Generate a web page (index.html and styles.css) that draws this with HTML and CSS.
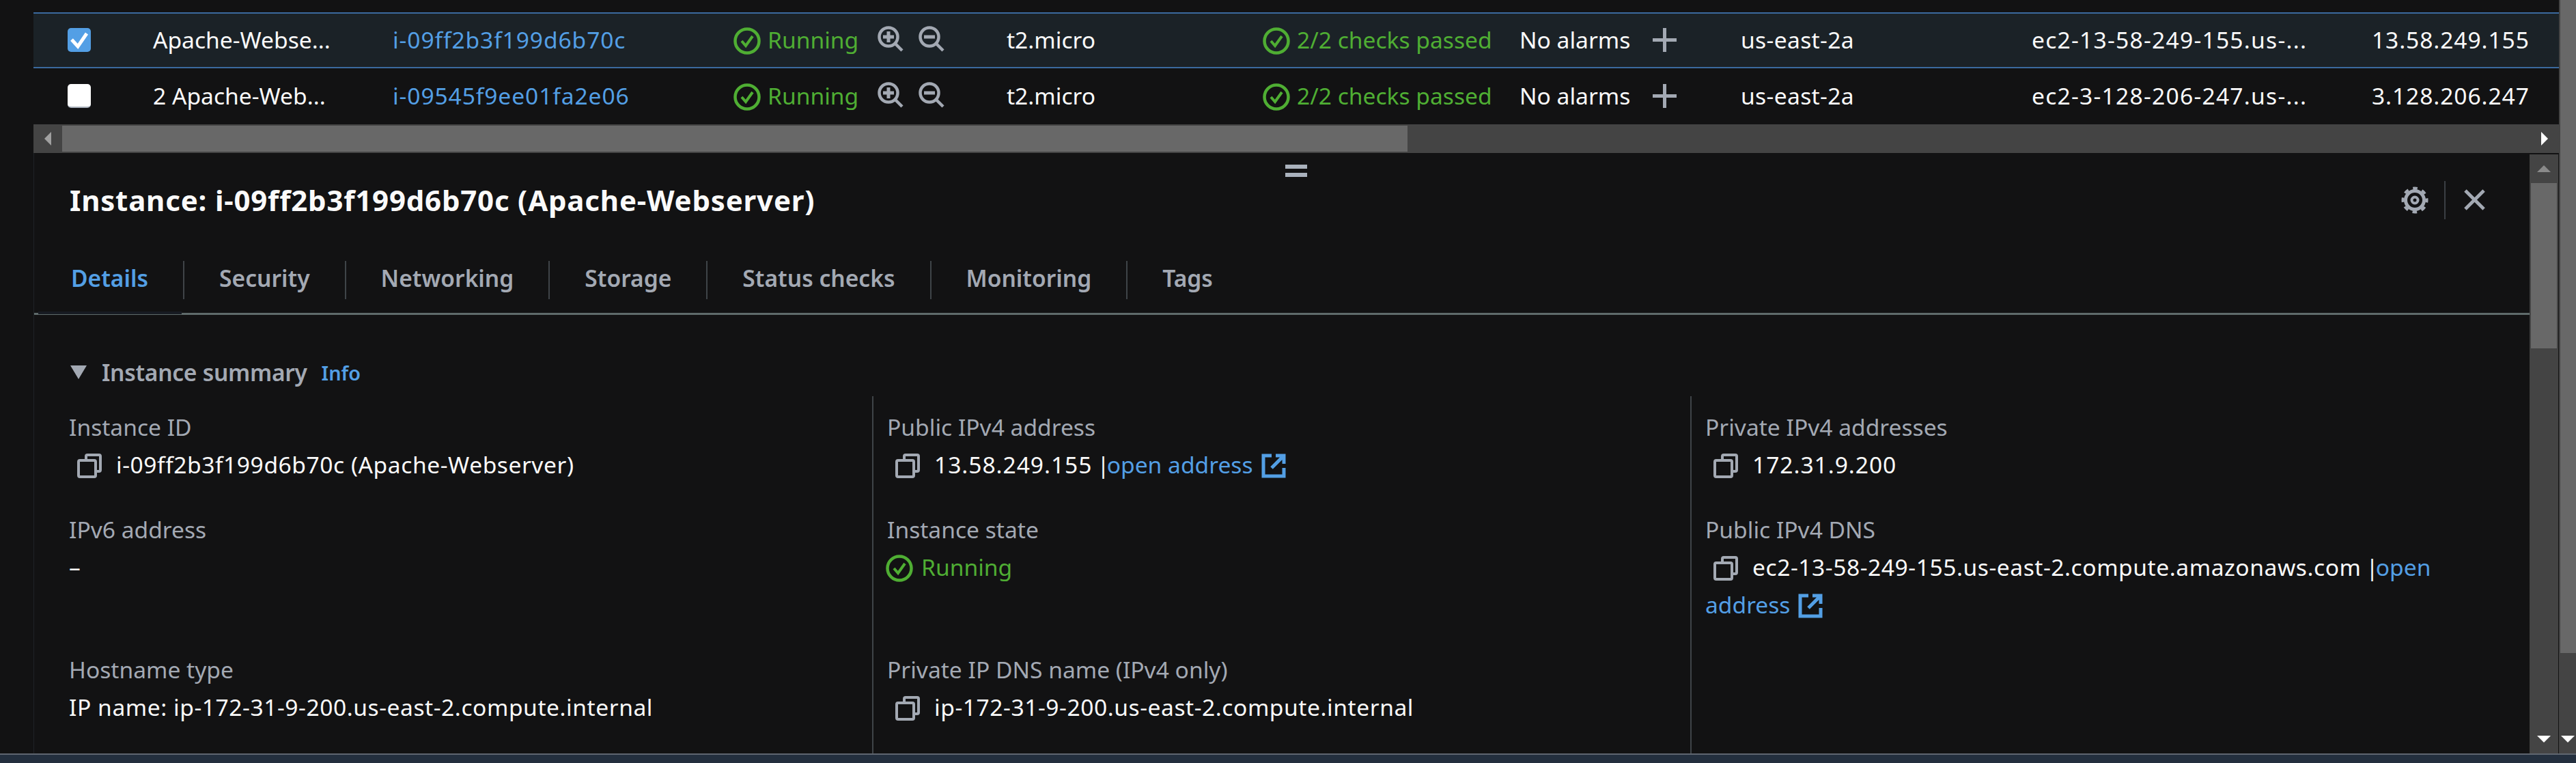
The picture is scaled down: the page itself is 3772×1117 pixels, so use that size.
FILE: index.html
```html
<!DOCTYPE html>
<html>
    <head>
        <meta charset="UTF-8">
        <title>Instances</title>
        <link rel="stylesheet" href="styles.css">
    </head>
    <body>
        <svg class="defs" width="0" height="0">
            <symbol id="ok" viewBox="0 0 40 40">
                <circle cx="20" cy="20" r="17.5" fill="none" stroke="currentColor" stroke-width="4.5"/>
                <path d="M12 20l6 7 10-14" fill="none" stroke="currentColor" stroke-width="4"/>
            </symbol>
            <symbol id="copy" viewBox="0 0 36 36">
                <path d="M13 8V4a2 2 0 0 1 2-2h17a2 2 0 0 1 2 2v20a2 2 0 0 1-2 2h-3" fill="none" stroke="currentColor" stroke-width="4"/>
                <rect x="2" y="10" width="25" height="24" rx="2" fill="none" stroke="currentColor" stroke-width="4"/>
            </symbol>
            <symbol id="ext" viewBox="0 0 36 36">
                <path d="M15 3H3v30h30V21" fill="none" stroke="currentColor" stroke-width="5"/>
                <path d="M21 3h12v12M33 3L15 21" fill="none" stroke="currentColor" stroke-width="5"/>
            </symbol>
            <symbol id="zoom-in" viewBox="0 0 38 38">
                <circle cx="16" cy="16" r="13.5" fill="none" stroke="currentColor" stroke-width="4.5"/>
                <path d="M26 26l10 10" stroke="currentColor" stroke-width="4.5"/>
                <path d="M16 8v16M8 16h16" stroke="currentColor" stroke-width="5"/>
            </symbol>
            <symbol id="zoom-out" viewBox="0 0 38 38">
                <circle cx="16" cy="16" r="13.5" fill="none" stroke="currentColor" stroke-width="4.5"/>
                <path d="M26 26l10 10" stroke="currentColor" stroke-width="4.5"/>
                <path d="M8 16h16" stroke="currentColor" stroke-width="5"/>
            </symbol>
        </svg>

        <div class="page">
            <div class="main">
                <div class="row row-selected">
                    <span class="cell c-check"><span class="check check-on">
                        <svg viewBox="0 0 34 35"><path d="M6 17l9 10 13-19" fill="none" stroke="#fff" stroke-width="5"/></svg>
                    </span></span>
                    <span class="cell c-name">Apache-Webse...</span>
                    <span class="cell c-id"><a>i-09ff2b3f199d6b70c</a></span>
                    <span class="cell c-state">
                        <svg class="ok-icon"><use href="#ok"/></svg><span class="green">Running</span>
                        <svg class="zoom-icon first"><use href="#zoom-in"/></svg><svg class="zoom-icon"><use href="#zoom-out"/></svg>
                    </span>
                    <span class="cell c-type">t2.micro</span>
                    <span class="cell c-checks"><svg class="ok-icon"><use href="#ok"/></svg><span class="green">2/2 checks passed</span></span>
                    <span class="cell c-alarm">No alarms<span class="plus"></span></span>
                    <span class="cell c-zone">us-east-2a</span>
                    <span class="cell c-dns">ec2-13-58-249-155.us-...</span>
                    <span class="cell c-ip">13.58.249.155</span>
                </div>
                <div class="row">
                    <span class="cell c-check"><span class="check"></span></span>
                    <span class="cell c-name">2 Apache-Web...</span>
                    <span class="cell c-id"><a>i-09545f9ee01fa2e06</a></span>
                    <span class="cell c-state">
                        <svg class="ok-icon"><use href="#ok"/></svg><span class="green">Running</span>
                        <svg class="zoom-icon first"><use href="#zoom-in"/></svg><svg class="zoom-icon"><use href="#zoom-out"/></svg>
                    </span>
                    <span class="cell c-type">t2.micro</span>
                    <span class="cell c-checks"><svg class="ok-icon"><use href="#ok"/></svg><span class="green">2/2 checks passed</span></span>
                    <span class="cell c-alarm">No alarms<span class="plus"></span></span>
                    <span class="cell c-zone">us-east-2a</span>
                    <span class="cell c-dns">ec2-3-128-206-247.us-...</span>
                    <span class="cell c-ip">3.128.206.247</span>
                </div>

                <div class="hscroll">
                    <span class="arrow-btn"><span class="tri-left"></span></span>
                    <span class="hthumb"></span>
                    <span class="hspace"></span>
                    <span class="arrow-btn"><span class="tri-right"></span></span>
                </div>

                <div class="panel">
                    <div class="panel-body">
                        <div class="handle"></div>
                        <div class="panel-head">
                            <h1>Instance: i-09ff2b3f199d6b70c (Apache-Webserver)</h1>
                            <span class="head-tools">
                                <svg class="gear" viewBox="0 0 40 40" fill="none" stroke="currentColor">
                                    <circle cx="20" cy="20" r="13.5" stroke-width="5"/>
                                    <circle cx="20" cy="20" r="17.5" stroke-width="4" stroke-dasharray="6.7 7.04" stroke-dashoffset="3.35"/>
                                    <circle cx="20" cy="20" r="4.5" stroke-width="4"/>
                                </svg>
                                <span class="tool-sep"></span>
                                <svg class="close" viewBox="0 0 34 34"><path d="M3 3l28 28M31 3L3 31" fill="none" stroke="currentColor" stroke-width="5"/></svg>
                            </span>
                        </div>
                        <div class="tabs">
                            <span class="tab tab-on">Details</span>
                            <span class="tab">Security</span>
                            <span class="tab">Networking</span>
                            <span class="tab">Storage</span>
                            <span class="tab">Status checks</span>
                            <span class="tab">Monitoring</span>
                            <span class="tab">Tags</span>
                        </div>
                        <div class="summary-head">
                            <span class="tri-down"></span>
                            <span class="summary-title">Instance summary</span>
                            <a class="info">Info</a>
                        </div>
                        <div class="fields">
                            <div class="field">
                                <div class="label">Instance ID</div>
                                <div class="value"><svg class="copy"><use href="#copy"/></svg><span class="num-sm">i-09ff2b3f199d6b70c (Apache-Webserver)</span></div>
                            </div>
                            <div class="field">
                                <div class="label">Public IPv4 address</div>
                                <div class="value"><svg class="copy"><use href="#copy"/></svg><span class="num">13.58.249.155</span> <span class="bar">|</span><a>open address<svg class="ext"><use href="#ext"/></svg></a></div>
                            </div>
                            <div class="field">
                                <div class="label">Private IPv4 addresses</div>
                                <div class="value"><svg class="copy"><use href="#copy"/></svg><span class="num">172.31.9.200</span></div>
                            </div>
                            <div class="field">
                                <div class="label">IPv6 address</div>
                                <div class="value">–</div>
                            </div>
                            <div class="field">
                                <div class="label">Instance state</div>
                                <div class="value"><svg class="ok-icon"><use href="#ok"/></svg><span class="green">Running</span></div>
                            </div>
                            <div class="field">
                                <div class="label">Public IPv4 DNS</div>
                                <div class="value"><svg class="copy"><use href="#copy"/></svg><span class="num-sm">ec2-13-58-249-155.us-east-2.compute.amazonaws.com</span> <span class="bar">|</span><a>open</a> <a>address<svg class="ext"><use href="#ext"/></svg></a></div>
                            </div>
                            <div class="field">
                                <div class="label">Hostname type</div>
                                <div class="value"><span class="num-sm">IP name: ip-172-31-9-200.us-east-2.compute.internal</span></div>
                            </div>
                            <div class="field">
                                <div class="label">Private IP DNS name (IPv4 only)</div>
                                <div class="value"><svg class="copy"><use href="#copy"/></svg><span class="num-sm">ip-172-31-9-200.us-east-2.compute.internal</span></div>
                            </div>
                            <div class="field"></div>
                        </div>
                    </div>
                    <div class="vscroll">
                        <span class="vbtn"><span class="tri-up"></span></span>
                        <span class="vthumb"></span>
                        <span class="vspace"></span>
                        <span class="vbtn"><span class="tri-dn"></span></span>
                    </div>
                </div>
            </div>
            <div class="outer-scroll">
                <span class="outer-thumb"></span>
                <span class="vspace"></span>
                <span class="vbtn"><span class="tri-dn"></span></span>
            </div>
        </div>
        <div class="footer"></div>
    </body>
</html>
```

FILE: styles.css
```css
html, body{
    margin: 0;
    padding: 0;
    height: 100%;
    overflow: hidden;
    background-color: #121213;
}
body{
    font-family: "Noto Sans", "Open Sans", sans-serif;
    font-size: 33.6px;
    color: #fafafa;
    display: flex;
    flex-direction: column;
}
a{
    color: #539fe5;
}
.defs{
    position: absolute;
}
.green{
    color: #4fae33;
}
/* digits run a bit wider in the original */
.num{
    letter-spacing: .95px;
}
.num-sm{
    letter-spacing: .55px;
}
.bar{
    margin: 0 -4px 0 -2px;
}
.page{
    flex: 1;
    display: flex;
    min-height: 0;
}
.main{
    flex: 1;
    min-width: 0;
    display: flex;
    flex-direction: column;
    padding: 18px 0 0 49px;
}
.outer-scroll{
    width: 25px;
    flex: none;
    background-color: #444;
    display: flex;
    flex-direction: column;
}
.outer-thumb{
    height: 956px;
    margin-left: 2px;
    background-color: #686868;
}

/* table rows */
.row{
    display: flex;
    align-items: center;
    height: 82px;
    padding-bottom: 2px;
    box-sizing: border-box;
    white-space: nowrap;
}
.row-selected{
    background-color: #1b2227;
    border-top: 2px solid #3b6a9e;
    border-bottom: 2px solid #3b6a9e;
}
.cell{
    display: flex;
    align-items: center;
    flex: none;
}
.c-check{ width: 175px; padding-left: 50px; box-sizing: border-box; }
.c-name{ width: 351px; }
.c-id{ width: 499px; letter-spacing: .9px; }
.c-state{ width: 400px; }
.c-type{ width: 375px; }
.c-checks{ width: 376px; }
.c-alarm{ width: 324px; }
.c-zone{ width: 426px; letter-spacing: .35px; }
.c-dns{ width: 498px; letter-spacing: 1.25px; }
.c-ip{ width: 274px; letter-spacing: .9px; }
.check{
    display: block;
    width: 34px;
    height: 35px;
    border-radius: 5px;
    background-color: #fff;
    border-bottom: 2px solid #aab2bd;
    box-sizing: border-box;
}
.check-on{
    background-color: #539fe5;
    border: 0;
}
.check svg{
    display: block;
    width: 34px;
    height: 35px;
}
.ok-icon{
    width: 40px;
    height: 40px;
    margin: 4px 10px 0 0;
    flex: none;
    color: #4fae33;
}
.zoom-icon{
    width: 38px;
    height: 38px;
    margin: 0 22px 2px 0;
    color: #a3a9b3;
    flex: none;
}
.zoom-icon.first{
    margin-left: 28px;
}
.plus{
    width: 35px;
    height: 35px;
    margin-left: 33px;
    background:
        linear-gradient(#a3a9b3, #a3a9b3) center / 100% 5px no-repeat,
        linear-gradient(#a3a9b3, #a3a9b3) center / 5px 100% no-repeat;
}

/* horizontal scrollbar */
.hscroll{
    height: 42px;
    background-color: #444;
    display: flex;
    box-sizing: border-box;
    padding: 2px 0;
}
.arrow-btn{
    width: 42px;
    display: flex;
    align-items: center;
    justify-content: center;
    flex: none;
}
.hthumb{
    width: 1970px;
    background-color: #686868;
}
.hspace{
    flex: 1;
}
.tri-left{
    border-right: 10px solid #a0a0a0;
    border-top: 10px solid transparent;
    border-bottom: 10px solid transparent;
}
.tri-right{
    border-left: 10px solid #fff;
    border-top: 10px solid transparent;
    border-bottom: 10px solid transparent;
}

/* split panel */
.panel{
    flex: 1;
    min-height: 0;
    display: flex;
    border-left: 1px solid #1f2326;
}
.panel-body{
    flex: 1;
    min-width: 0;
    position: relative;
}
.handle{
    position: absolute;
    left: 1832px;
    top: 17px;
    width: 32px;
    height: 6px;
    border-top: 6px solid #aab2bd;
    border-bottom: 6px solid #aab2bd;
}
.panel-head{
    height: 135px;
    display: flex;
    align-items: center;
    justify-content: space-between;
    padding: 2px 64px 0 52px;
    box-sizing: border-box;
}
h1{
    margin: 0;
    font-size: 42px;
    font-weight: 700;
    letter-spacing: .8px;
}
.head-tools{
    display: flex;
    align-items: center;
    color: #a3a9b3;
}
.gear{
    width: 40px;
    height: 40px;
}
.tool-sep{
    width: 2px;
    height: 56px;
    margin: 0 26px 0 23px;
    background-color: #3b3f44;
}
.close{
    width: 33px;
    height: 33px;
}

/* tabs */
.tabs{
    height: 102px;
    display: flex;
    align-items: center;
    border-bottom: 3px solid #5f6b6b;
    padding: 2px 0 0 3px;
    box-sizing: border-box;
}
.tab{
    position: relative;
    color: #a3a9b3;
    font-weight: 600;
    padding: 0 51px 0 51px;
    height: 56px;
    line-height: 51px;
    border-right: 2px solid #3f4448;
}
.tab-on{
    color: #539fe5;
}
.tab-on::after{
    content: "";
    position: absolute;
    left: 3px;
    bottom: -22px;
    width: 210px;
    height: 4px;
    background-color: #171b22;
}
.tab:last-child{
    border-right: 0;
}

.summary-head{
    display: flex;
    align-items: center;
    height: 56px;
    margin: 56px 0 7px 53px;
}
.tri-down{
    border-top: 20px solid #a3a9b3;
    border-left: 12px solid transparent;
    border-right: 12px solid transparent;
    margin-right: 22px;
}
.summary-title{
    color: #a3a9b3;
    font-weight: 600;
    letter-spacing: -.3px;
}
.info{
    font-size: 28.8px;
    font-weight: 600;
    margin-left: 21px;
}

/* the three columns of fields */
.fields{
    display: grid;
    grid-template-columns: 1227px 1198px 1fr;
    grid-template-rows: 168px 205px 1fr;
    height: 523px;
}
.field{
    padding: 0 60px 0 20px;
    line-height: 55px;
    border-left: 2px solid #3f4448;
    box-sizing: border-box;
}
.field:nth-child(-n+3){
    padding-top: 18px;
}
.field:nth-child(3n+1){
    border-left: 0;
    padding-left: 51px;
}
.label{
    color: #a3a9b3;
}
.copy{
    width: 36px;
    height: 36px;
    margin: 0 21px 0 12px;
    color: #a3a9b3;
    vertical-align: -7px;
}
.ext{
    width: 36px;
    height: 36px;
    margin-left: 12px;
    vertical-align: -7px;
    color: #539fe5;
}
.value .ok-icon{
    margin: 0 12px 0 -2px;
    vertical-align: -9px;
}

/* inner scrollbar */
.vscroll{
    width: 42px;
    flex: none;
    margin: 2px 1px 0 0;
    background-color: #444;
    display: flex;
    flex-direction: column;
}
.vbtn{
    height: 42px;
    flex: none;
    display: flex;
    align-items: center;
    justify-content: center;
}
.vthumb{
    height: 242px;
    margin: 0 2px;
    background-color: #686868;
}
.vspace{
    flex: 1;
}
.tri-up{
    border-bottom: 10px solid #8a8a8a;
    border-left: 10px solid transparent;
    border-right: 10px solid transparent;
}
.tri-dn{
    border-top: 10px solid #fff;
    border-left: 10px solid transparent;
    border-right: 10px solid transparent;
}

.footer{
    height: 14px;
    flex: none;
    background-color: #232f3e;
    border-top: 2px solid #5f6670;
    box-sizing: border-box;
}
```
